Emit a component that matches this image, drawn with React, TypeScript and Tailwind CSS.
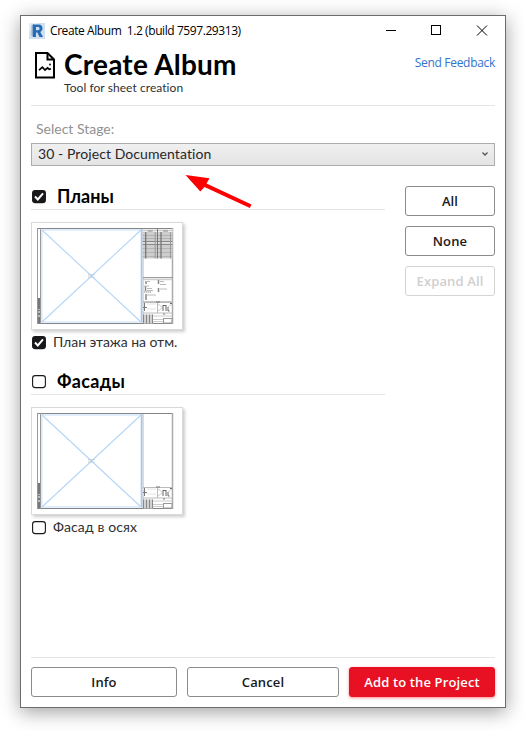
import type { ReactNode } from "react";

const museo = "font-['Lato','Noto_Sans',sans-serif] [font-variant-ligatures:none]";
const segoe = "font-['Open_Sans','Noto_Sans',sans-serif]";

function RevitLogo() {
  return (
    <svg width="16" height="16" viewBox="0 0 16 16">
      <rect width="16" height="16" fill="#cfe0f1" />
      <path d="M0 0h9L0 9z" fill="#e3edf8" />
      <path d="M2.500 2l2.500-1v13l-2.500-1z" fill="#87a9cf" />
      <path
        d="M4 1.500h5.200c3 0 4.300 1.600 4.300 3.800 0 1.800-.8 3-2.200 3.600L14 14h-3.500L8.300 9.500H7V14H4zM7 4v3.200h2c1 0 1.600-.6 1.600-1.600S10 4 9 4z"
        fill="#266cb3"
        fillRule="evenodd"
      />
    </svg>
  );
}

function AlbumIcon() {
  return (
    <svg width="20" height="27" viewBox="0 0 20 27" fill="none" stroke="#000">
      <path d="M1 1h11.500L19 7.500V25.500H1z" strokeWidth="2" />
      <path d="M12.500 1v6.500H19" strokeWidth="2" />
      <path d="M4 18.200l3.400-3 2.600 2.800 2.600-2.200 1.600 1.600 1.800-.6" strokeWidth="1.700" />
      <circle cx="15" cy="12.500" r="0.900" fill="#000" stroke="none" />
    </svg>
  );
}

function Check({ checked = false }: { checked?: boolean }) {
  return (
    <svg width="14" height="14" viewBox="0 0 14 14" className="shrink-0">
      <rect x=".6" y=".6" width="12.800" height="12" rx="2.600" fill={checked ? "#18181b" : "#fff"} stroke="#18181b" strokeWidth="1.100" />
      {checked && <path d="M3 6.500l2.800 2.900 5.200-6" fill="none" stroke="#fff" strokeWidth="2" />}
    </svg>
  );
}

function Schedule({ x }: { x: number }) {
  return (
    <g>
      <rect x={x} y="6" width="14.500" height="29.500" fill="#cdcdcd" />
      <path d={`M${x} 6.500h14.500M${x} 8.500h14.500`} stroke="#eee" />
      <path d={`M${x + 5} 8h5M${x} 18.500h14.500M${x} 21.500h14.500`} stroke="#888" />
      <path d={`M${x} 12.500h14.500M${x} 15.500h14.500M${x} 25.500h14.500M${x} 29.500h14.500M${x} 33.500h14.500`} stroke="#b3b3b3" />
      <path d={`M${x} 20h14.500`} stroke="#e8e8e8" />
      <path d={`M${x + 3} 9v26.500`} stroke="#777" strokeWidth="1.300" />
      <path d={`M${x + 12.500} 9v26.500`} stroke="#999" />
    </g>
  );
}

function Sheet({ full = false }: { full?: boolean }) {
  return (
    <svg width="150" height="106" viewBox="0 0 150 106" className="block">
      <path d="M5.500 5.500H141M5.500 100.500H141" stroke="#858585" />
      <path d="M5.500 5v96M8.500 5v96" stroke="#999" />
      <path d="M140.500 5v96" stroke="#aaa" strokeWidth="1.500" />
      <path d="M7 75v25" stroke="#777" strokeWidth="2.200" strokeDasharray="11 .5 2 1 3 1" />
      <path d="M111 6v94" stroke="#cfcfcf" strokeWidth="1.500" />
      <rect x="9.800" y="7" width="99.500" height="92" fill="#fff" stroke="#d8e9fa" strokeWidth="1.500" />
      <path d="M109.500 6v93" stroke="#9ecbfa" strokeWidth="1.300" />
      <path d="M10 7l99 92M10 99L109 7" stroke="#b4d6f8" strokeWidth="1.100" />
      <path d="M56 51.800h6.500M56 54h6.500" stroke="#b5b5b5" strokeWidth=".8" strokeDasharray="1 .5" />
      {full && (
        <g>
          <Schedule x={110.700} />
          <Schedule x={126} />
          <path d="M125.500 6v29.500" stroke="#777" />
          <path d="M111 54.700h29.500" stroke="#888" />
          <path d="M111 56.700h29.500M111 78.500h29.500" stroke="#c4c4c4" />
          <path d="M114 58v3M113.500 63v5M114 71v6M126.500 57v4M126.500 65v4" stroke="#888" strokeWidth="1.500" />
          <path d="M114 58.500h4M112 63h5M115 65.500h5M115 67.500h6M115 72h9M128 58.500h4M128 61.500h6M128 66h7" stroke="#bbb" />
          <path d="M112 69h7" stroke="#888" strokeDasharray="1.500 .5" />
        </g>
      )}
      <path d="M111 79.500h29.500M111 90h29.500" stroke="#bbb" />
      <path d="M124 79h4M131 91h2" stroke="#777" />
      <path d="M112.500 80v8M111 84.500h4" stroke="#777" />
      <path d="M115 81h9M115 86h9" stroke="#e2e2e2" />
      <path d="M125.500 80v10" stroke="#bbb" />
      <path d="M130.500 82.500h4M131 88v-5M134 83v5M136 84v4h1.500M138 80.500h2" stroke="#555" fill="none" strokeWidth=".9" />
      <path d="M126 81l4 3M126 88l4-3M140 81l-4 3" stroke="#ccc" />
      <rect x="111" y="91.500" width="10" height="9" fill="#d2d2d2" />
      <path d="M111.500 91.500v9M114.500 91.500v9M117.500 91.500v9M120.500 91.500v9" stroke="#888" />
      <path d="M121 93h19M121 96.500h10M121 98.500h10" stroke="#ccc" />
      <rect x="131.500" y="95.500" width="8.500" height="4.500" fill="none" stroke="#999" />
    </svg>
  );
}

function Group({ title, titleSpacing, item, itemSpacing, checked = false }: { title: string; titleSpacing: string; item: string; itemSpacing: string; checked?: boolean }) {
  return (
    <section className="h-[185px] w-[354px]">
      <div className="flex h-6 items-center border-b border-[#e5e5e5] pl-px">
        <div className="-mt-[2px]"><Check checked={checked} /></div>
        <h2 className={`${museo} -mt-[3px] ml-[11px] text-[18px] font-bold leading-6 text-black ${titleSpacing}`}>{title}</h2>
      </div>
      <div className="mt-3 h-[108px] w-[152px] border border-[#d9d9d9] bg-white shadow-[2px_2px_3px_rgba(0,0,0,0.2)]">
        <Sheet full={checked} />
      </div>
      <div className="mt-1.5 flex h-4 pl-px">
        <Check checked={checked} />
        <span className={`${museo} -mt-px ml-[7px] text-[14px] leading-[14px] text-[#303033] ${itemSpacing}`}>{item}</span>
      </div>
    </section>
  );
}

function Button({ children, className = "" }: { children: ReactNode; className?: string }) {
  return (
    <button className={`${segoe} flex h-[30px] items-center justify-center rounded-[3px] border pt-[2px] text-[13px] font-semibold tracking-[0.13px] ${className}`}>
      {children}
    </button>
  );
}

export default function App() {
  return (
    <div className="h-[730px] w-[524px] overflow-hidden bg-white pl-5 pt-[15px]">
      <main className="relative flex h-[693px] w-[486px] flex-col border border-[#6c6c6c] bg-white shadow-[0_4px_18px_rgba(0,0,0,0.38)]">
        <div className="flex h-[30px] shrink-0 items-center pl-2">
          <RevitLogo />
          <span className={`${segoe} ml-[5px] whitespace-pre text-[12px] tracking-[-0.42px] text-black`}>Create Album  1.2 (build 7597.29313)</span>
          <svg width="104" height="12" viewBox="0 0 104 12" className="ml-auto mr-4" fill="none" stroke="#000">
            <path d="M1 5.500h10" />
            <rect x="46.500" y="0.500" width="9" height="9" />
            <path d="M92 .5l10 10M102 .5l-10 10" />
          </svg>
        </div>
        <header className="mx-2.5 flex h-[60px] shrink-0 border-b border-[#e5e5e5] pl-1">
          <div className="mt-[6px]"><AlbumIcon /></div>
          <div className="ml-[9px]">
            <h1 className={`${museo} mt-[2px] text-[28px] font-bold leading-8 tracking-[0.22px] text-black`}>Create Album</h1>
            <p className={`${museo} mt-px text-[12px] leading-[14px] tracking-[0.06px] text-[#303033]`}>Tool for sheet creation</p>
          </div>
          <a className={`${segoe} ml-auto mt-[8px] text-[12px] leading-[18px] tracking-[-0.3px] text-[#3474cc]`}>Send Feedback</a>
        </header>
        <div className="mx-2.5 shrink-0">
          <label className={`${museo} mt-[14px] ml-[5px] block h-[23px] text-[14px] leading-[18px] text-[#919191]`}>Select Stage:</label>
          <div className="flex h-[23px] items-center justify-between border border-[#acacac] bg-linear-to-b from-[#f0f0f0] to-[#e4e4e4] pl-1.5 pr-[6px]">
            <span className={`${museo} -mt-[2px] text-[14px] leading-5 tracking-[0.08px] text-[#27272a]`}>30 - Project Documentation</span>
            <svg width="6" height="6" viewBox="0 0 6 6" className="-mt-px" fill="none" stroke="#555" strokeWidth="1.300"><path d="M.5 1.500L3 4l2.500-2.500" /></svg>
          </div>
        </div>
        <div className="mx-2.5 mt-5 flex grow justify-between">
          <div>
            <Group title="Планы" titleSpacing="tracking-normal" item="План этажа на отм." itemSpacing="tracking-[-0.05px]" checked />
            <Group title="Фасады" titleSpacing="tracking-[0.4px]" item="Фасад в осях" itemSpacing="tracking-[0.13px]" />
          </div>
          <div className="flex w-[90px] flex-col gap-2.5">
            <Button className="border-[#8b8b8b] text-[#18181b]">All</Button>
            <Button className="border-[#8b8b8b] text-[#18181b]">None</Button>
            <Button className="border-[#d4d4d4] text-[#cfcfcf]">Expand All</Button>
          </div>
        </div>
        <footer className="mx-2.5 mb-2.5 flex shrink-0 gap-2.5 border-t border-[#e5e5e5] pt-[9px]">
          <Button className="w-[146px] border-[#8b8b8b] text-[#18181b]">Info</Button>
          <Button className="w-[152px] border-[#8b8b8b] text-[#18181b]">Cancel</Button>
          <Button className="w-[146px] border-[#e81123] bg-[#e81123] text-white shadow-[0_1px_3px_rgba(232,17,35,0.5)]">Add to the Project</Button>
        </footer>
        <svg className="absolute left-[164px] top-[158px]" width="68" height="36" viewBox="0 0 68 36">
          <path d="M.5 1L24.500 4.300l-3 5.200L66.500 30.500l-1.600 3.400L19.500 13l-4.200 4.500z" fill="#fe0000" />
        </svg>
      </main>
    </div>
  );
}
